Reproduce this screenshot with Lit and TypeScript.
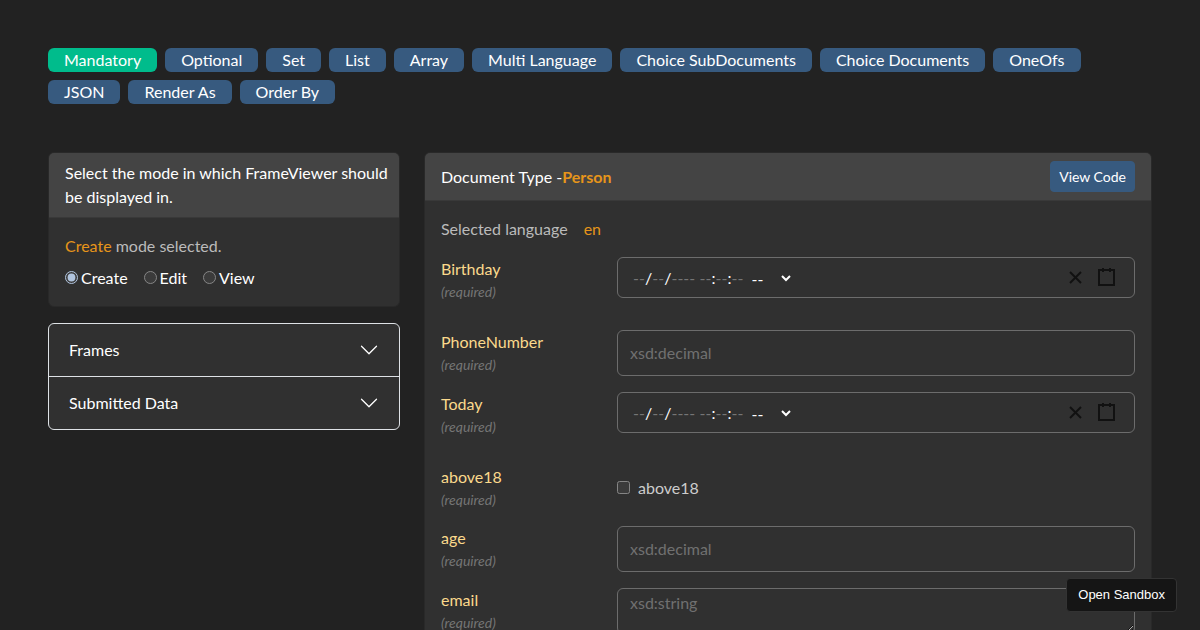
import { LitElement, html, css } from "lit";
import { customElement, property, state } from "lit/decorators.js";
import { classMap } from "lit/directives/class-map.js";

@customElement("date-time-field")
class DateTimeField extends LitElement {
  @property() label = "";

  static styles = css`
    :host {
      display: block;
      color-scheme: dark;
    }
    .wrapper {
      display: flex;
      align-items: center;
      box-sizing: border-box;
      height: 41px;
      padding: 0 12px;
      border: 1px solid #6c6c6c;
      border-radius: 6px;
      margin-bottom: 16px;
    }
    .group {
      flex: 1;
      display: flex;
      align-items: center;
      padding: 1px 2px 0;
      color: #fff;
      white-space: pre;
    }
    .part {
      box-sizing: border-box;
      width: 12px;
      height: 24px;
      padding: 0;
      border: 0;
      background: none;
      font: inherit;
      color: #fff;
    }
    .part:first-child {
      margin-left: 1px;
    }
    .part::placeholder {
      color: #757575;
    }
    .year {
      width: 24px;
    }
    .ampm {
      height: 24px;
      margin-left: 4px;
      padding: 0;
      border: 0;
      background: none;
      font: inherit;
      color: #fff;
    }
    .ampm option {
      background: #303030;
    }
    .icon {
      display: block;
      padding: 4px 6px;
      border: 0;
      background: none;
    }
    .icon svg {
      display: block;
      stroke: #111;
      stroke-width: 2;
      fill: none;
    }
  `;

  private segment(name: string, dashes = "--") {
    return html`<input
      class=${classMap({ part: true, year: name === "year" })}
      inputmode="numeric"
      aria-label="${this.label} ${name}"
      placeholder=${dashes}
    />`;
  }

  render() {
    return html`<div class="wrapper" role="group" aria-label=${this.label}>
      <div class="group">${this.segment("month")}<span>/</span>${this.segment("day")}<span>/</span>${this.segment("year", "----")}<span> </span>${this.segment("hour")}<span>:</span>${this.segment("minute")}<span>:</span>${this.segment("second")}<select class="ampm" aria-label="${this.label} AM/PM">
          <option>--</option>
          <option>AM</option>
          <option>PM</option>
        </select>
      </div>
      <button class="icon" type="button" aria-label="Clear ${this.label}">
        <svg width="19" height="19" viewBox="0 0 19 19">
          <line x1="4" x2="15" y1="4" y2="15" />
          <line x1="15" x2="4" y1="4" y2="15" />
        </svg>
      </button>
      <button class="icon" type="button" aria-label="Open calendar for ${this.label}">
        <svg width="19" height="19" viewBox="0 0 19 19">
          <rect width="15" height="15" x="2" y="2" />
          <line x1="6" x2="6" y1="0" y2="4" />
          <line x1="13" x2="13" y1="0" y2="4" />
        </svg>
      </button>
    </div>`;
  }
}

type Field = { name: string; kind: "datetime" | "decimal" | "boolean" | "string" };

const TABS = [
  "Mandatory", "Optional", "Set", "List", "Array", "Multi Language",
  "Choice SubDocuments", "Choice Documents", "OneOfs", "JSON", "Render As", "Order By",
];

const FIELDS: Field[] = [
  { name: "Birthday", kind: "datetime" },
  { name: "PhoneNumber", kind: "decimal" },
  { name: "Today", kind: "datetime" },
  { name: "above18", kind: "boolean" },
  { name: "age", kind: "decimal" },
  { name: "email", kind: "string" },
];

@customElement("app-root")
class AppRoot extends LitElement {
  @state() private tab = "Mandatory";
  @state() private mode = "Create";

  static styles = css`
    :host {
      display: block;
      box-sizing: border-box;
      min-height: 100vh;
      padding: 48px;
      background: #222;
      color: #fff;
      font: 16px/24px Lato, sans-serif;
    }
    button,
    input,
    textarea {
      font: inherit;
      color: inherit;
    }
    .tabs {
      display: flex;
      flex-wrap: wrap;
      gap: 8px;
      margin-bottom: 48px;
    }
    .tab {
      padding: 0 16px;
      border: 0;
      border-radius: 6px;
      background: #375a7f;
    }
    .tab.active {
      background: #00bc8c;
    }
    /* Keeps the 4/8 split of a twelve-column grid including its gutters. */
    .columns {
      display: grid;
      grid-template-columns: calc((100% + 24px) / 3 - 24px) minmax(0, 1fr);
      gap: 24px;
      align-items: start;
    }
    .side {
      display: grid;
      gap: 16px;
    }
    .card {
      border: 1px solid #292929;
      border-radius: 6px;
      background: #303030;
      overflow: hidden;
    }
    .head {
      display: flex;
      align-items: center;
      justify-content: space-between;
      padding: 8px 16px;
      border-bottom: 1px solid #393939;
      background: #444;
    }
    .side .head {
      padding-right: 8px;
    }
    .body {
      padding: 16px;
    }
    .accent {
      color: #e6951a;
    }
    .status {
      margin-bottom: 8px;
      color: #bbb;
    }
    .modes {
      display: flex;
      gap: 16px;
    }
    .mode {
      display: flex;
      align-items: center;
      gap: 3px;
    }
    .mode input,
    .check input {
      width: 13px;
      height: 13px;
      margin: 0 0 2px;
      color-scheme: dark;
    }
    .mode input {
      accent-color: #b0c4de;
    }
    .accordion {
      border: 1px solid #dee2e6;
      border-radius: 6px;
      background: #303030;
      overflow: hidden;
    }
    .fold {
      display: flex;
      align-items: center;
      justify-content: space-between;
      width: 100%;
      padding: 14px 20px;
      border: 0;
      background: none;
    }
    .fold + .fold {
      border-top: 1px solid #dee2e6;
    }
    .fold svg {
      display: block;
    }
    .code {
      padding: 4px 8px;
      border: 1px solid #375a7f;
      border-radius: 4px;
      background: #375a7f;
      font-size: 14px;
      line-height: 21px;
    }
    .language {
      display: flex;
      gap: 16px;
      margin-bottom: 16px;
      color: #bbb;
    }
    .fields {
      display: grid;
      gap: 16px;
    }
    .field {
      display: grid;
      grid-template-columns: 176px minmax(0, 1fr);
      align-items: start;
    }
    .name {
      display: block;
      color: #fbd98c;
    }
    .hint {
      display: block;
      color: #757575;
      font-size: 14px;
      font-style: italic;
      line-height: 21px;
    }
    .text {
      display: block;
      box-sizing: border-box;
      width: 100%;
      height: 46px;
      padding: 6px 12px 8px;
      border: 1px solid #6c6c6c;
      border-radius: 6px;
      background: none;
      color-scheme: dark;
    }
    .text::placeholder {
      color: #707070;
    }
    .area {
      padding-top: 4px;
      line-height: 20px;
      resize: vertical;
    }
    .check {
      display: flex;
      align-items: center;
      gap: 8px;
      padding-top: 11px;
      color: #ccc;
    }
    .sandbox {
      position: fixed;
      right: 23px;
      bottom: 18px;
      padding: 8px 11px;
      border: 1px solid #333;
      border-radius: 4px;
      background: #151515;
      font: 13px/16px "Liberation Sans", Arial, sans-serif;
      color: #fff;
      text-decoration: none;
    }
  `;

  private control(f: Field) {
    switch (f.kind) {
      case "datetime":
        return html`<date-time-field .label=${f.name}></date-time-field>`;
      case "boolean":
        return html`<label class="check"><input type="checkbox" id=${f.name} />${f.name}</label>`;
      case "string":
        return html`<textarea class="text area" id=${f.name} placeholder="xsd:string"></textarea>`;
      default:
        return html`<input class="text" id=${f.name} placeholder="xsd:decimal" />`;
    }
  }

  render() {
    return html`
      <nav class="tabs">
        ${TABS.map(
          (t) => html`<button
            class=${classMap({ tab: true, active: t === this.tab })}
            @click=${() => (this.tab = t)}
          >${t}</button>`
        )}
      </nav>
      <main class="columns">
        <div class="side">
          <section class="card">
            <div class="head">Select the mode in which FrameViewer should be displayed in.</div>
            <div class="body">
              <div class="status"><span class="accent">${this.mode}</span> mode selected.</div>
              <div class="modes">
                ${["Create", "Edit", "View"].map(
                  (m) => html`<label class="mode"
                    ><input
                      type="radio"
                      name="mode"
                      .checked=${m === this.mode}
                      @change=${() => (this.mode = m)}
                    />${m}</label
                  >`
                )}
              </div>
            </div>
          </section>
          <section class="accordion">
            ${["Frames", "Submitted Data"].map(
              (t) => html`<button class="fold" aria-expanded="false">
                ${t}
                <svg width="20" height="20" viewBox="0 0 16 16" fill="#fff">
                  <path fill-rule="evenodd" d="M1.646 4.646a.5.5 0 0 1 .708 0L8 10.293l5.646-5.647a.5.5 0 0 1 .708.708l-6 6a.5.5 0 0 1-.708 0l-6-6a.5.5 0 0 1 0-.708z" />
                </svg>
              </button>`
            )}
          </section>
        </div>
        <section class="card">
          <div class="head">
            <span>Document Type -<strong class="accent">Person</strong></span>
            <button class="code">View Code</button>
          </div>
          <form class="body">
            <div class="language"><span>Selected language</span><span class="accent">en</span></div>
            <div class="fields">
              ${FIELDS.map(
                (f) => html`<div class="field">
                  <label for=${f.name}><span class="name">${f.name}</span><span class="hint">(required)</span></label>
                  ${this.control(f)}
                </div>`
              )}
            </div>
          </form>
        </section>
      </main>
      <a class="sandbox" href="#sandbox">Open Sandbox</a>
    `;
  }
}
